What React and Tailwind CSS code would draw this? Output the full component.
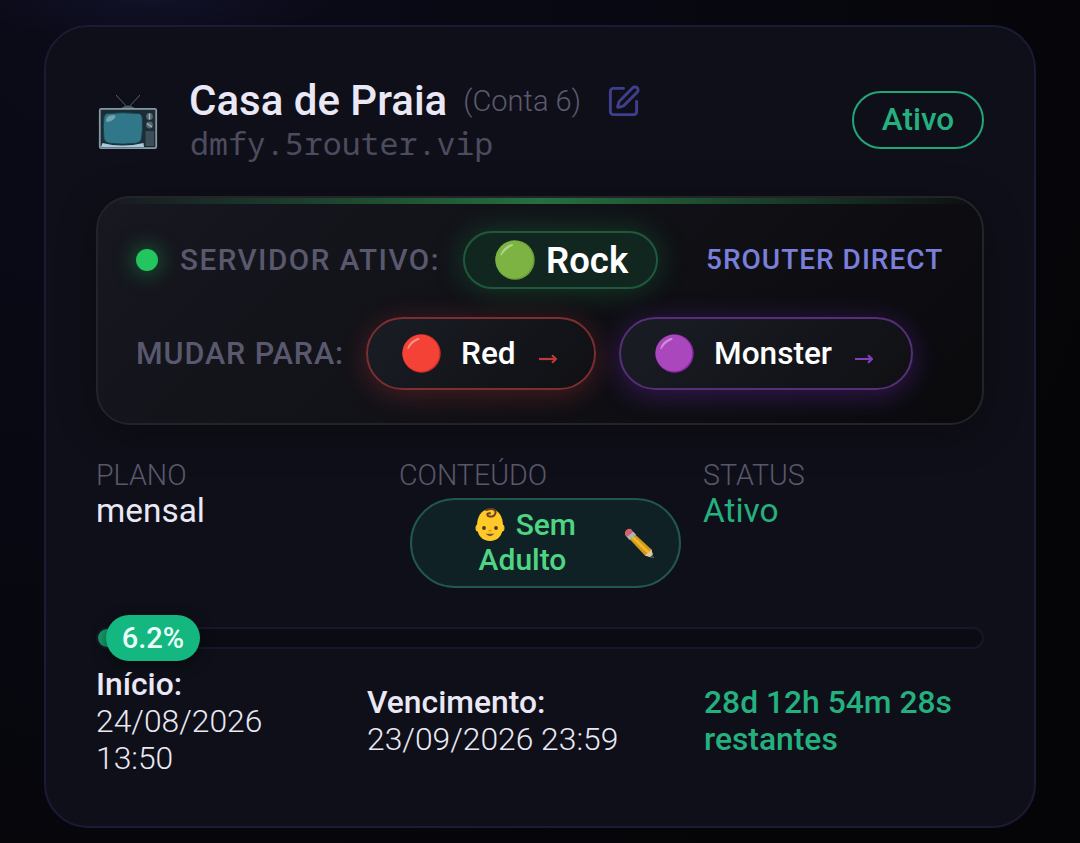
import { SquarePen } from 'lucide-react';

const servers = [
  {
    name: 'Red',
    ball: '#f44336',
    edge: '#d32f2f',
    pill: 'w-[230px] border-[#7c2e31] shadow-[0_5px_28px_rgba(239,68,68,0.25)]',
    arrow: 'text-[#bb3b3b]',
  },
  {
    name: 'Monster',
    ball: '#ab47bc',
    edge: '#8e24aa',
    pill: 'w-[294px] border-[#553078] shadow-[0_5px_28px_rgba(147,51,234,0.3)]',
    arrow: 'text-[#843fbd]',
  },
];

function TvIcon() {
  return (
    <svg width="60" height="56" viewBox="0 0 60 56" className="shrink-0">
      <path d="M18 1 L30 14 L42 1" fill="none" stroke="#56606a" strokeWidth="1" />
      <path d="M23 14 Q30 9 37 14 Z" fill="#46606a" />
      <rect x="1.8" y="14.8" width="56.4" height="39.4" rx="1.5" fill="#1c2c34" stroke="#8599a3" strokeWidth="1.8" />
      <path d="M3 53 L4.5 49 Q24 54 45.500 49 L46 53 Z" fill="#a5cbdc" />
      <path d="M9 19.500 Q25 18 41 19.500 Q44 20 44.300 24 Q45 35 43.500 45 Q42.500 48.500 38 49.200 Q25 51 11 49.200 Q7 48.500 6 45 Q4.500 33 6 23 Q6.500 20 9 19.500Z" fill="#307889" stroke="#193f4b" strokeWidth="1" />
      <path d="M8 27 Q8 21 16 21 Q19 22 16 25 Q13 28 9 28Z" fill="#72a5b0" />
      <circle cx="51.500" cy="22.500" r="3.400" fill="#536570" />
      <path d="M51.500 19.500v6" stroke="#aab4b9" strokeWidth="1.3" />
      <circle cx="51.500" cy="31" r="3.400" fill="#536570" />
      <path d="M49 29.500l5 3.500" stroke="#aab4b9" strokeWidth="1.3" />
      <rect x="47.500" y="37" width="8.500" height="15" fill="#3c4d57" />
    </svg>
  );
}

function Ball({ color, edge, size }) {
  return (
    <svg width={size} height={size} viewBox="0 0 40 40" className="shrink-0">
      <circle cx="20" cy="20" r="19.700" fill={edge} />
      <circle cx="19.300" cy="19.600" r="18.800" fill={color} />
      <path d="M5.500 14.500 Q8 7 16 4.200 Q19.500 3.800 17.500 6 Q11 8.500 7.500 14 Q5.500 17 5.500 14.500Z" fill="#fff" opacity="0.4" />
    </svg>
  );
}

function ArrowIcon({ className }) {
  return (
    <svg width="20" height="10" viewBox="0 0 20 10" fill="none" stroke="currentColor" strokeWidth="2.2" className={className}>
      <path d="M1 5h17" />
      <path d="M14 1.300l4 3.700l-4 3.700" strokeLinejoin="round" />
    </svg>
  );
}

function BabyIcon() {
  return (
    <svg width="30" height="34" viewBox="0 0 30 34" className="shrink-0">
      <ellipse cx="2.800" cy="20" rx="2.300" ry="3.500" fill="#f9c02d" />
      <ellipse cx="27.200" cy="20" rx="2.300" ry="3.500" fill="#f9c02d" />
      <path d="M15 1 C24 1 28 9 28 18 C28 28 22 33 15 33 C8 33 2 28 2 18 C2 9 6 1 15 1Z" fill="#ffca28" />
      <path d="M11 2 Q21 -1 20.500 5 Q19 10 13 8 Q11 5 15 5.200" fill="none" stroke="#6d3f25" strokeWidth="2" strokeLinecap="round" />
      <circle cx="9" cy="20" r="1.900" fill="#4e342e" />
      <circle cx="21" cy="20" r="1.900" fill="#4e342e" />
      <path d="M12.500 26.500 Q15 28.500 17.500 26.500Z" fill="#795548" stroke="#795548" strokeWidth="1.300" />
      <path d="M14 22.800h2" stroke="#e59600" strokeWidth="1.500" strokeLinecap="round" />
    </svg>
  );
}

function PencilIcon() {
  return (
    <svg width="31" height="31" viewBox="0 0 31 31" className="shrink-0">
      <path d="M8.500 4 L27.500 21.500 L29.500 30 L21 27.500 L3.500 9Z" fill="#d39a1a" />
      <path d="M6.500 7 L24.500 24.500" stroke="#efb932" strokeWidth="2.500" />
      <path d="M27.500 21.500 L29.500 30 L21 27.500Z" fill="#ddc9a4" />
      <path d="M28.700 26.500 L29.700 30.200 L26 29.200Z" fill="#3e4347" />
      <path d="M9 3.500 L12 6.500 L5.500 12 L2.500 8.500Z" fill="#a7b4ba" />
      <path d="M1 4 Q3 0 7 1 L9 3.500 L2.800 9 L1 7Z" fill="#d4606b" />
    </svg>
  );
}

function Header() {
  return (
    <div className="flex h-[86px] items-start">
      <div className="ml-[2px] mt-[17px] w-[91px]">
        <TvIcon />
      </div>
      <div className="flex-1">
        <div className="flex h-[47px] items-center whitespace-nowrap">
          <h1 className="text-[42px] font-medium leading-[47px] text-[#e9e8f4]">Casa de Praia</h1>
          <span className="ml-[16px] mt-[2px] text-[29px] font-light text-[#5c5a6e]">(Conta 6)</span>
          <SquarePen className="ml-[25px] mt-[2px] text-[#3f3f8d]" size={35} strokeWidth={2} />
        </div>
        <p className="ml-px font-['Noto_Sans_Mono','DejaVu_Sans_Mono',monospace] text-[31.6px] leading-[38px] text-[#4d4b5f]">
          dmfy.5router.vip
        </p>
      </div>
      <span className="mt-[14px] flex h-[58px] w-[132px] items-center justify-center rounded-full border-2 border-[#20a678] text-[31.5px] font-medium text-[#24b17f]">
        Ativo
      </span>
    </div>
  );
}

function ServerPanel() {
  return (
    <div className="relative mt-[33px] h-[229px] overflow-hidden rounded-[34px] border-2 border-[#232329] bg-linear-135 from-[#171820] to-[#0a0a0d] pl-[38px] pt-[33px] shadow-[0_8px_40px_rgba(0,0,0,0.3)]">
      <div className="absolute inset-x-0 top-0 h-[6px] bg-linear-to-r from-transparent via-[#24703f] to-transparent" />
      <div className="flex h-[58px] items-center whitespace-nowrap">
        <span className="size-[22px] rounded-full bg-[#22c55e] shadow-[0_0_22px_rgba(34,197,94,0.6)]" />
        <span className="ml-[22px] w-[283px] text-[29.6px] font-medium tracking-[1.5px] text-[#5a586e]">SERVIDOR ATIVO:</span>
        <span className="flex h-[58px] w-[195px] items-center rounded-full border-2 border-[#1f593c] bg-[#122620] pl-[30px] shadow-[0_0_30px_rgba(34,197,94,0.25)]">
          <Ball color="#7cb342" edge="#689f38" size={40} />
          <span className="ml-[11px] mt-[2px] text-[36.5px] font-semibold text-white">Rock</span>
        </span>
        <span className="ml-[48px] text-[28px] font-medium tracking-[1px] text-[#7b7fdc]">5ROUTER DIRECT</span>
      </div>
      <div className="mt-[28px] flex h-[73px] items-center whitespace-nowrap">
        <span className="w-[230px] text-[30.5px] font-medium tracking-[0.9px] text-[#5a586e]">MUDAR PARA:</span>
        <div className="flex gap-[23px]">
          {servers.map((s) => (
            <button
              key={s.name}
              className={`flex h-[73px] items-center rounded-full border-2 bg-linear-135 from-[#191d24] to-[#101014] pl-[34px] ${s.pill}`}
            >
              <Ball color={s.ball} edge={s.edge} size={39} />
              <span className="ml-[20px] text-[31.6px] font-medium text-white">{s.name}</span>
              <ArrowIcon className={`ml-[22px] mt-[11px] ${s.arrow}`} />
            </button>
          ))}
        </div>
      </div>
    </div>
  );
}

function Details() {
  return (
    <div className="mt-[32px] grid h-[131px] grid-cols-[280px_279px_1fr] gap-6">
      <div>
        <p className="text-[28.6px] font-light leading-[36px] text-[#5a586a]">PLANO</p>
        <p className="text-[33.4px] leading-[36px] text-[#e9e8f4]">mensal</p>
      </div>
      <div>
        <p className="-ml-px text-[28.6px] font-light leading-[36px] text-[#5a586a]">CONTEÚDO</p>
        <button className="ml-[10px] mt-[5px] flex h-[90px] w-[271px] items-center rounded-full border-2 border-[#20594a] bg-[#102126] pb-[2px] pl-[57px]">
          <span className="w-[107px] text-[30px] font-medium leading-[35px] text-[#4ed583]">
            <span className="flex items-center justify-end gap-[11px]">
              <BabyIcon />
              Sem
            </span>
            <span className="block">Adulto</span>
          </span>
          <span className="ml-[48px] mt-[2px]">
            <PencilIcon />
          </span>
        </button>
      </div>
      <div>
        <p className="text-[28.6px] font-light leading-[36px] text-[#5a586a]">STATUS</p>
        <p className="text-[33.4px] leading-[36px] text-[#24b17f]">Ativo</p>
      </div>
    </div>
  );
}

function Progress({ percent }) {
  return (
    <div className="relative mt-[39px] h-[22px] rounded-full border-2 border-[#17172b] bg-[#0b0b13]">
      <div className="h-full rounded-full bg-[#159c69]" style={{ width: `${percent}%` }} />
      <span className="absolute -top-[14px] left-[8px] flex h-[46px] w-[94px] items-center justify-center rounded-full bg-[#14b780] pt-[2px] text-[29px] font-medium text-[#e9fff7] shadow-[0_4px_14px_rgba(0,0,0,0.5)]">
        {percent}%
      </span>
    </div>
  );
}

function Dates() {
  return (
    <div className="mt-[17px] flex h-[111px] items-center text-[31.8px] leading-[37px] text-[#e9e8f4]">
      <div className="w-[271px]">
        <p className="font-medium">Início:</p>
        <p className="font-light">24/08/2026</p>
        <p className="font-light">13:50</p>
      </div>
      <div className="w-[337px] pb-[2px]">
        <p className="font-medium">Vencimento:</p>
        <p className="font-light">23/09/2026 23:59</p>
      </div>
      <div className="flex-1 pb-[2px] font-medium text-[#24b17f]">
        <p className="whitespace-nowrap">28d 12h 54m 28s</p>
        <p>restantes</p>
      </div>
    </div>
  );
}

export default function App() {
  return (
    <main className="h-[843px] overflow-hidden bg-[#050509] bg-[radial-gradient(ellipse_190px_40px_at_150px_0px,#111128_0%,transparent_100%),radial-gradient(circle_at_10%_0%,#0b0b19_0%,#080812_40%,#050508_80%)] px-[44px] pt-[25px] font-[Roboto,sans-serif]">
      <section className="h-[803px] rounded-[44px] border-2 border-[#1b1b35] bg-[#0f0f19] px-[50px] pt-[50px]">
        <Header />
        <ServerPanel />
        <Details />
        <Progress percent={6.2} />
        <Dates />
      </section>
    </main>
  );
}
